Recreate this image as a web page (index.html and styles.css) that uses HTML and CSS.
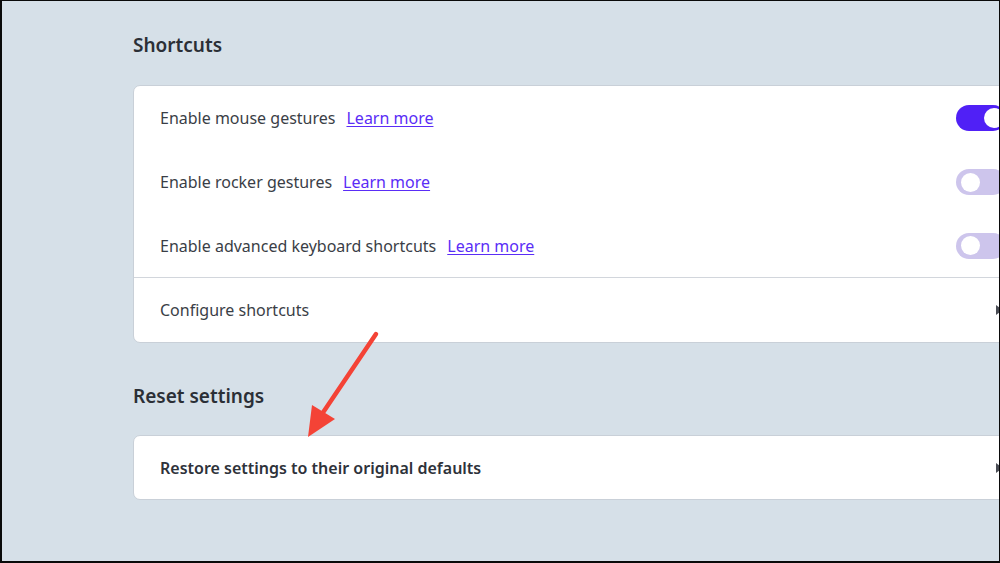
FILE: index.html
```html
<!DOCTYPE html>
<html>
<head>
<meta charset="utf-8">
<link rel="stylesheet" href="styles.css">
</head>
<body>
<div class="frame">
  <div class="page">
    <h2 class="section-title">Shortcuts</h2>
    <div class="card">
      <div class="row">
        <span class="label">Enable mouse gestures</span><a class="link" href="#">Learn more</a>
        <span class="toggle on"><span class="knob"></span></span>
      </div>
      <div class="row">
        <span class="label">Enable rocker gestures</span><a class="link" href="#">Learn more</a>
        <span class="toggle"><span class="knob"></span></span>
      </div>
      <div class="row short">
        <span class="label">Enable advanced keyboard shortcuts</span><a class="link" href="#">Learn more</a>
        <span class="toggle"><span class="knob"></span></span>
      </div>
      <div class="row nav-row">
        <span class="label">Configure shortcuts</span>
        <svg class="chev" width="10" height="12" viewBox="0 0 10 12"><path d="M1 1 L8 6 L1 11 Z" fill="#4a4d55"/></svg>
      </div>
    </div>

    <h2 class="section-title reset-title">Reset settings</h2>
    <div class="card">
      <div class="row nav-row single">
        <span class="label strong">Restore settings to their original defaults</span>
        <svg class="chev" width="10" height="12" viewBox="0 0 10 12"><path d="M1 1 L8 6 L1 11 Z" fill="#4a4d55"/></svg>
      </div>
    </div>

    <svg class="annot" width="1000" height="563" viewBox="0 0 1000 563">
      <line x1="376" y1="334" x2="322" y2="414" stroke="#f44336" stroke-width="4.5" stroke-linecap="round"/>
      <polygon points="308,437 312,405 335,419" fill="#f44336"/>
    </svg>
  </div>
</div>
</body>
</html>
```

FILE: styles.css
```css
html, body {
  margin: 0;
  padding: 0;
  background: #0a0a0a;
  width: 1000px;
  height: 563px;
  overflow: hidden;
}

.frame {
  box-sizing: border-box;
  width: 1000px;
  height: 563px;
  padding: 1px 1px 2px 2px;
}

.page {
  position: relative;
  width: 997px;
  height: 560px;
  background: #d6e0e8;
  overflow: hidden;
  padding: 0 0 0 131px;
  box-sizing: border-box;
  font-family: "Noto Sans", "Open Sans", sans-serif;
  color: #3a3e46;
}

.section-title {
  margin: 0;
  padding-top: 30px;
  height: 84px;
  box-sizing: border-box;
  font-size: 19px;
  font-weight: 600;
  line-height: 28px;
  color: #2b2f36;
}

.reset-title {
  padding-top: 39px;
  height: 92px;
}

.card {
  width: 898px;
  background: #ffffff;
  border: 1px solid #c9d0d8;
  border-radius: 7px;
  box-sizing: border-box;
}

.row {
  display: flex;
  align-items: center;
  height: 64px;
  padding: 0 24px 0 26px;
}

.row.short {
  height: 63px;
}

.nav-row {
  border-top: 1px solid #d2d6dc;
}

.nav-row.single {
  border-top: none;
  height: 63px;
}

.label {
  font-size: 16px;
  color: #3a3e46;
}

.label.strong {
  font-weight: 600;
  color: #2e323a;
}

.link {
  margin-left: 11px;
  font-size: 16px;
  color: #5a2df6;
  text-decoration: underline;
  text-underline-offset: 2px;
}

.toggle {
  margin-left: auto;
  width: 50px;
  height: 26px;
  border-radius: 13px;
  background: #cdc5ec;
  display: flex;
  align-items: center;
  padding: 0 5px;
  box-sizing: border-box;
}

.toggle.on {
  background: #5020f6;
  justify-content: flex-end;
  padding-right: 2px;
}

.knob {
  width: 19px;
  height: 19px;
  border-radius: 50%;
  background: #ffffff;
}

.toggle.on .knob {
  width: 20px;
  height: 20px;
}

.chev {
  margin-left: auto;
  position: relative;
  left: -1px;
}

.annot {
  position: absolute;
  left: -2px;
  top: -1px;
  pointer-events: none;
}
```
